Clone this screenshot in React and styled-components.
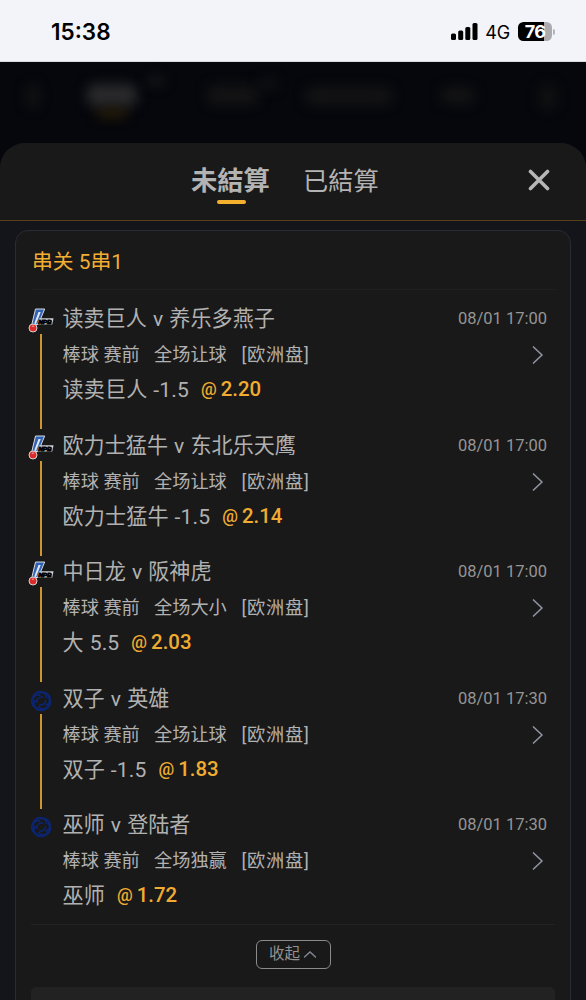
import React from "react";
import styled, { createGlobalStyle } from "styled-components";

const Global = createGlobalStyle`
  * { box-sizing: border-box; }
  body {
    margin: 0;
    background: #14151b;
    font-family: Roboto, "Noto Sans CJK SC", sans-serif;
    overflow: hidden;
  }
`;

const Screen = styled.div`
  width: 586px;
  height: 1000px;
  overflow: hidden;
  display: flex;
  flex-direction: column;
  background: #06070c;
`;

const StatusBar = styled.header`
  height: 62px;
  flex: none;
  background: #f3f4f9;
  border-bottom: 1px solid #d8dadd;
  display: flex;
  align-items: center;
  justify-content: space-between;
  padding: 2px 31px 0 51px;
  color: #000;
  font-family: Inter, sans-serif;
`;

const Clock = styled.span`
  font-size: 22.5px;
  font-weight: 600;
  letter-spacing: 0;
`;

const StatusIcons = styled.div`
  display: flex;
  align-items: center;
`;

const Network = styled.span`
  font-size: 18px;
  margin: 1px 8px 0 7px;
  letter-spacing: -0.2px;
`;

const Battery = styled.div`
  width: 34px;
  height: 19px;
  border-radius: 5.5px;
  background: linear-gradient(90deg, #000 26px, #ababad 26px);
  color: #fff;
  font-size: 18px;
  font-weight: 700;
  letter-spacing: -0.8px;
  line-height: 19px;
  text-align: center;
`;

const BatteryTip = styled.div`
  width: 2px;
  height: 6px;
  margin-left: 1px;
  border-radius: 0 3px 3px 0;
  background: #b5b5b7;
`;

const DimmedNav = styled.nav`
  height: 81px;
  flex: none;
  display: flex;
  align-items: flex-start;
  padding: 20px 20px 0 22px;
`;

const Haze = styled.div`
  width: ${(p) => p.$w}px;
  height: ${(p) => p.$h}px;
  margin-left: ${(p) => p.$ml || 0}px;
  margin-top: ${(p) => p.$mt || 0}px;
  border-radius: 8px;
  background: ${(p) => p.$c || "#131314"};
  filter: blur(6px);
`;

const ActiveHaze = styled.div`
  display: flex;
  flex-direction: column;
  align-items: center;
  margin-left: 48px;
`;

const Sheet = styled.main`
  flex: 1;
  min-height: 0;
  display: flex;
  flex-direction: column;
  border-radius: 25px 25px 0 0;
  background: #14151b;
  overflow: hidden;
`;

const SheetHeader = styled.div`
  height: 78px;
  flex: none;
  background: #191919;
  border-bottom: 1.5px solid #583f14;
  display: grid;
  grid-template-columns: 191px 80px 32px 1fr 24px 35px;
  align-items: start;
  padding-top: 18px;
`;

const Tab = styled.button`
  border: 0;
  padding: 0;
  background: none;
  text-align: left;
  white-space: nowrap;
  grid-column: ${(p) => (p.$active ? 2 : 4)};
  font-family: "Noto Sans CJK TC", sans-serif;
  font-size: ${(p) => (p.$active ? 26.3 : 25.2)}px;
  font-weight: ${(p) => (p.$active ? 700 : 400)};
  line-height: 36px;
  color: #b3b3b3;
  display: flex;
  flex-direction: column;
`;

const TabMark = styled.span`
  width: 29px;
  height: 4px;
  border-radius: 2px;
  background: #f5b02e;
  align-self: center;
  margin-top: 3px;
`;

const CloseButton = styled.button`
  grid-column: 5;
  border: 0;
  padding: 1px 0 0;
  background: none;
  height: 37px;
  display: flex;
  align-items: center;
  justify-content: center;
`;

const Card = styled.section`
  flex: none;
  height: 800px;
  margin: 9px 15px 0;
  padding: 0 15px;
  border: 1.5px solid #2a2b34;
  border-radius: 13px;
  background: #191919;
`;

const CardTitle = styled.h1`
  margin: 0;
  height: 59px;
  padding: 0 0 1px 1px;
  display: flex;
  align-items: center;
  border-bottom: 1px solid #202020;
  font-size: 20.8px;
  font-weight: 400;
  color: #f3ae32;
`;

const Legs = styled.div`
  height: 635px;
  padding-top: 12px;
  border-bottom: 1px solid #222;
`;

const Leg = styled.article`
  height: 126.6px;
  display: grid;
  grid-template-columns: 31.5px 1fr;
`;

const Rail = styled.div`
  display: flex;
  flex-direction: column;
  padding-top: 6px;
  margin-left: -3px;
  width: 26px;

  svg { display: block; flex: none; }
`;

const RailLine = styled.span`
  width: 1.6px;
  height: 95px;
  margin-left: 12px;
  flex: none;
  background: #cf9630;
`;

const LegBody = styled.div`
  min-width: 0;
  padding-right: 8px;
`;

const Line = styled.div`
  height: ${(p) => p.$h}px;
  display: flex;
  align-items: center;
  white-space: nowrap;
  font-size: ${(p) => p.$size}px;
  color: #b1b1b1;
`;

const Teams = styled.span`
  margin-top: -1px;
  word-spacing: 0.9px;
`;

const Spacer = styled.span`
  flex: 1;
`;

const Time = styled.time`
  font-size: 16.5px;
  letter-spacing: 0;
  margin-top: 2px;
  color: #959595;
`;

const Kind = styled.span`
  width: 91.5px;
`;

const Market = styled.span`
  width: 87.5px;
`;

const Region = styled.span`
  letter-spacing: 0.8px;
`;

const Arrow = styled.span`
  display: flex;
  margin-right: 3px;
  padding-top: 4px;
`;

const Pick = styled.span`
  word-spacing: 0.5px;
  letter-spacing: 0.15px;
`;

const Odds = styled.span`
  display: flex;
  align-items: center;
  gap: 4px;
  margin: 2px 0 0 12px;
  color: #f0ac31;
  font-weight: 500;
  font-size: 20.4px;
`;

const At = styled.span`
  font-size: 17.5px;
  font-weight: 500;
`;

const Footer = styled.div`
  height: 62px;
  display: flex;
  justify-content: center;
  align-items: flex-start;
  padding-top: 15px;
`;

const CollapseButton = styled.button`
  width: 75px;
  height: 29px;
  padding: 0 0 3px;
  border: 1.5px solid #8b8b8b;
  border-radius: 6px;
  background: none;
  display: flex;
  align-items: center;
  justify-content: center;
  gap: 3px;
  color: #929292;
  font: 15.5px/1 "Noto Sans CJK SC", sans-serif;

  svg { margin-top: 2px; }
`;

const Summary = styled.div`
  height: 80px;
  border-radius: 5px;
  background: #222;
`;

const Signal = () => (
  <svg width="27" height="17" viewBox="0 0 27 17">
    <rect x="0" y="10.5" width="5" height="6.5" rx="1.5" />
    <rect x="7.2" y="7.5" width="5" height="9.5" rx="1.5" />
    <rect x="14.3" y="4" width="5" height="13" rx="1.5" />
    <rect x="21.5" y="0" width="5" height="17" rx="1.5" />
  </svg>
);

const Npb = () => (
  <svg width="26" height="26" viewBox="0 0 26 26">
    <path d="M7.500 1h9.200L10.200 16.500H3.800z" fill="#2f62b4" stroke="#d7dbe3" strokeWidth="1" strokeLinejoin="round" />
    <path d="M10.500 4h2.200L8 16l-1.800-.5z" fill="#e4e8ef" />
    <path d="M11.300 10.200H25.500l-1.200 6.200H9z" fill="#cfcfcf" />
    <text x="10.200" y="15.500" fontSize="6" fontWeight="900" fontStyle="italic" fontFamily="Liberation Sans, sans-serif" textLength="13.500" lengthAdjust="spacingAndGlyphs" fill="#000" stroke="#000" strokeWidth=".8">NPB</text>
    <circle cx="5" cy="20" r="4" fill="#dc2a2a" stroke="#d8d2d2" strokeWidth="1" />
    <path d="M3.800 18.500q1.500-1.300 2.400.2" fill="none" stroke="#efb1ad" strokeWidth="1" />
  </svg>
);

const Swirl = () => (
  <svg width="26" height="26" viewBox="0 0 26 26">
    <g transform="translate(13.200 13)" fill="none" stroke="#0c2570" strokeLinecap="round">
      {[0, 72, 144, 216, 288].map((a) => (
        <path key={a} transform={`rotate(${a})`} d="M-8.300-1.500C-8.300-7-3-10.800 2-8.300C5-7 5.500-5 5.200-3.500" strokeWidth="2" />
      ))}
      <path d="M-4.500 1.500C-5-2-2-4.500 1.500-4M4.300-.5C4 3 1 4.500-1.500 3.800" strokeWidth="1.600" />
    </g>
  </svg>
);

const Chevron = () => (
  <svg width="12" height="20" viewBox="0 0 12 20" fill="none" stroke="#8d929e" strokeWidth="1.7" strokeLinecap="round" strokeLinejoin="round">
    <path d="M1.5 2 10 10l-8.500 8" />
  </svg>
);

const legs = [
  { logo: "npb", match: "读卖巨人 v 养乐多燕子", time: "08/01 17:00", market: "全场让球", pick: "读卖巨人 -1.5", odds: "2.20" },
  { logo: "npb", match: "欧力士猛牛 v 东北乐天鹰", time: "08/01 17:00", market: "全场让球", pick: "欧力士猛牛 -1.5", odds: "2.14" },
  { logo: "npb", match: "中日龙 v 阪神虎", time: "08/01 17:00", market: "全场大小", pick: "大 5.5", odds: "2.03" },
  { logo: "mlb", match: "双子 v 英雄", time: "08/01 17:30", market: "全场让球", pick: "双子 -1.5", odds: "1.83" },
  { logo: "mlb", match: "巫师 v 登陆者", time: "08/01 17:30", market: "全场独赢", pick: "巫师", odds: "1.72" },
];

export default function App() {
  return (
    <>
      <Global />
      <Screen>
        <StatusBar>
          <Clock>15:38</Clock>
          <StatusIcons>
            <Signal />
            <Network>4G</Network>
            <Battery>76</Battery>
            <BatteryTip />
          </StatusIcons>
        </StatusBar>
        <DimmedNav>
          <Haze $w={12} $h={24} $mt={2} $ml={5} />
          <ActiveHaze>
            <Haze $w={50} $h={23} $mt={2} $c="#29292b" />
            <Haze $w={30} $h={7} $mt={3} $c="#302305" />
          </ActiveHaze>
          <Haze $w={18} $h={8} $mt={-5} $ml={10} $c="#18181a" />
          <Haze $w={52} $h={20} $ml={42} $mt={3} />
          <Haze $w={18} $h={10} $mt={-3} />
          <Haze $w={88} $h={18} $ml={28} $mt={5} />
          <Haze $w={34} $h={17} $ml={48} $mt={5} />
          <Haze $w={18} $h={24} $ml={64} $mt={3} $c="#111112" />
        </DimmedNav>
        <Sheet>
          <SheetHeader>
            <Tab $active>
              未結算
              <TabMark />
            </Tab>
            <Tab>已結算</Tab>
            <CloseButton aria-label="close">
              <svg width="22" height="22" viewBox="0 0 22 22" stroke="#b6b6b6" strokeWidth="3.600" strokeLinecap="round">
                <path d="M2.500 2.500 19.500 19.500M19.500 2.500 2.500 19.500" />
              </svg>
            </CloseButton>
          </SheetHeader>
          <Card>
            <CardTitle>串关 5串1</CardTitle>
            <Legs>
              {legs.map((leg, i) => (
                <Leg key={leg.match}>
                  <Rail>
                    {leg.logo === "npb" ? <Npb /> : <Swirl />}
                    {i < legs.length - 1 && <RailLine />}
                  </Rail>
                  <LegBody>
                    <Line $h={31} $size={21.1}>
                      <Teams>{leg.match}</Teams>
                      <Spacer />
                      <Time>{leg.time}</Time>
                    </Line>
                    <Line $h={40} $size={18.2}>
                      <Kind>棒球 赛前</Kind>
                      <Market>{leg.market}</Market>
                      <Region>[欧洲盘]</Region>
                      <Spacer />
                      <Arrow>
                        <Chevron />
                      </Arrow>
                    </Line>
                    <Line $h={30} $size={21.1}>
                      <Pick>{leg.pick}</Pick>
                      <Odds>
                        <At>@</At>
                        {leg.odds}
                      </Odds>
                    </Line>
                  </LegBody>
                </Leg>
              ))}
            </Legs>
            <Footer>
              <CollapseButton>
                收起
                <svg width="14" height="9" viewBox="0 0 14 9" fill="none" stroke="#858a94" strokeWidth="1.3" strokeLinecap="round">
                  <path d="M1.500 7 7 2l5.500 5" />
                </svg>
              </CollapseButton>
            </Footer>
            <Summary />
          </Card>
        </Sheet>
      </Screen>
    </>
  );
}
